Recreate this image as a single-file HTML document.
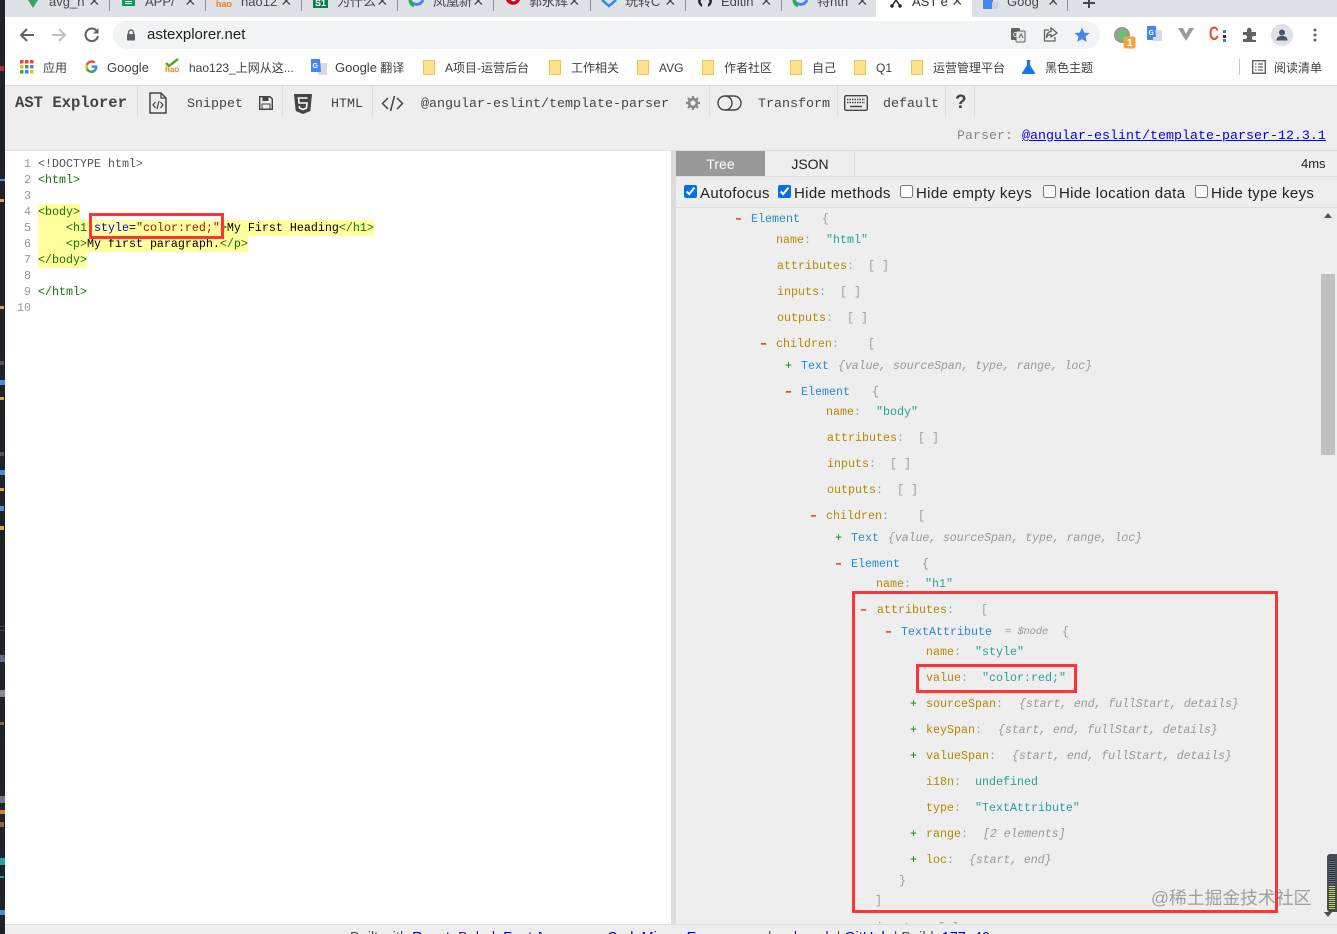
<!DOCTYPE html>
<html lang="en"><head><meta charset="utf-8"><title>AST Explorer</title>
<style>
*{box-sizing:border-box}
html,body{margin:0;padding:0;width:1337px;height:934px;overflow:hidden;background:#fff;font-family:"Liberation Sans","Noto Sans CJK SC",sans-serif}
.a{position:absolute;white-space:pre}
svg{position:absolute;overflow:visible}
.tab{font-size:13px;color:#45494e;line-height:12px;top:-4px}
.x{font-size:18px;color:#45494e;top:-6px;line-height:14px}
.sep{position:absolute;top:0;width:1px;height:11px;background:#8d9096}
.bm{font-size:12px;color:#3c4043;top:60px;line-height:16px}
.bm u{text-decoration:none;font-size:13px}
.m{font-family:"Liberation Mono","Noto Sans CJK SC",monospace}
.t{font-size:13.34px;color:#444;top:97px;line-height:16px;font-family:"Liberation Mono",monospace}
.v{position:absolute;top:86px;width:1px;height:31px;background:#ddd}
.c{font:11.67px/16px "Liberation Mono",monospace;color:#000;transform:translateY(1px)}
.ln{font:11.67px/16px "Liberation Mono",monospace;color:#999;width:24px;text-align:right;left:7px;transform:translateY(1px)}
.hl{position:absolute;background:#ffff9e;height:16px}
.g{color:#170}.b{color:#00f}.r{color:#a11}.k{color:#555}
.r1{font:11.67px/16px "Liberation Mono",monospace;transform:translateY(1px)}
.K{color:#b58900}.T{color:#268bd2}.V{color:#2aa198}.P{color:#93a1a1}
.K b{color:#93a1a1;font-weight:normal}
.I{color:#999;font-style:italic;letter-spacing:-.13px}
.mi{color:#f00;font-weight:bold}.pl{color:#080}
.cb{position:absolute;top:185px;margin:0;width:13px;height:13px;accent-color:#0b6fe8}
.cl{font-size:15px;top:185px;line-height:17px;color:#222;letter-spacing:.35px}
.box{position:absolute;border:3px solid #f33}
</style></head><body>
<!-- left dark strip -->
<div class="a" style="left:0;top:0;width:5px;height:934px;background:#1f2329"></div>
<div class="a" style="left:0;top:66px;width:4px;height:5px;background:#a33"></div>
<div class="a" style="left:0;top:179px;width:5px;height:2px;background:#4a90d9"></div>
<div class="a" style="left:0;top:199px;width:4px;height:3px;background:#d9a441"></div>
<div class="a" style="left:0;top:306px;width:4px;height:3px;background:#d9a441"></div>
<div class="a" style="left:0;top:361px;width:4px;height:4px;background:#555"></div>
<div class="a" style="left:0;top:380px;width:5px;height:5px;background:#4a90d9"></div>
<div class="a" style="left:0;top:397px;width:4px;height:3px;background:#d9a441"></div>
<div class="a" style="left:0;top:452px;width:4px;height:4px;background:#555"></div>
<div class="a" style="left:0;top:470px;width:5px;height:5px;background:#4a90d9"></div>
<div class="a" style="left:0;top:488px;width:4px;height:3px;background:#d9a441"></div>
<div class="a" style="left:0;top:506px;width:4px;height:5px;background:#4a90d9"></div>
<div class="a" style="left:0;top:526px;width:4px;height:4px;background:#d9a441"></div>
<div class="a" style="left:0;top:655px;width:5px;height:7px;background:#6a6a8a"></div>
<div class="a" style="left:0;top:630px;width:5px;height:1px;background:#444"></div>
<div class="a" style="left:0;top:626px;width:5px;height:1px;background:#444"></div>
<div class="a" style="left:0;top:690px;width:5px;height:7px;background:#888"></div>
<div class="a" style="left:3px;top:657px;width:2px;height:1px;background:#555"></div>
<div class="a" style="left:0;top:796px;width:5px;height:7px;background:#777"></div>
<div class="a" style="left:0;top:810px;width:5px;height:4px;background:#c9853a"></div>
<div class="a" style="left:3px;top:656px;width:2px;height:1px;background:#555"></div>
<div class="a" style="left:3px;top:656px;width:2px;height:1px;background:#555"></div>
<div class="a" style="left:0;top:722px;width:4px;height:3px;background:#8a6a3a"></div>
<div class="a" style="left:0;top:822px;width:4px;height:5px;background:#8a6a3a"></div>
<div class="a" style="left:0;top:858px;width:5px;height:7px;background:#2aa198"></div>
<div class="a" style="left:0;top:876px;width:4px;height:2px;background:#2aa198"></div>
<div class="a" style="left:0;top:910px;width:5px;height:5px;background:#4a90d9"></div>

<!-- tab strip -->
<div class="a" style="left:5px;top:0;width:1332px;height:17px;background:#dee1e6"></div>
<div class="a" style="left:876px;top:0;width:96px;height:17px;background:#fff"></div>
<div class="sep" style="left:109px"></div><div class="sep" style="left:205px"></div><div class="sep" style="left:301px"></div><div class="sep" style="left:397px"></div><div class="sep" style="left:493px"></div><div class="sep" style="left:590px"></div><div class="sep" style="left:685px"></div><div class="sep" style="left:781px"></div><div class="sep" style="left:1067px"></div>
<svg style="left:27px;top:0" width="12" height="9"><path d="M1 0H11L6 8Z" fill="#3aa56b"/></svg>
<span class="a tab" style="left:49px">avg_n</span><span class="a x" style="left:89px">×</span>
<div class="a" style="left:122px;top:0;width:13px;height:6px;background:#0f9d58"></div><div class="a" style="left:125px;top:1px;width:7px;height:1px;background:#fff"></div><div class="a" style="left:125px;top:3px;width:7px;height:1px;background:#fff"></div>
<span class="a tab" style="left:145px">APP/</span><span class="a x" style="left:185px">×</span>
<span class="a" style="left:216px;top:0;font:bold 9px/8px 'Liberation Sans';color:#f47a20">hao</span>
<span class="a tab" style="left:241px">hao12</span><span class="a x" style="left:281px">×</span>
<div class="a" style="left:313px;top:0;width:15px;height:8px;background:#0a7a52;color:#fff;font:bold 9px/7px 'Liberation Sans';text-align:center">S1</div>
<span class="a tab" style="left:337px">为什么</span><span class="a x" style="left:377px">×</span>
<svg style="left:409px;top:0" width="15" height="8"><path d="M1 0A7 7 0 0 0 14 0" fill="none" stroke="#4285f4" stroke-width="3"/><path d="M1 0A7 7 0 0 0 5 6" fill="none" stroke="#34a853" stroke-width="3"/></svg>
<span class="a tab" style="left:433px">凤凰新</span><span class="a x" style="left:473px">×</span>
<svg style="left:505px;top:0" width="16" height="9"><path d="M1 0A7.5 7.5 0 0 0 15 0Z" fill="#d7000f"/><path d="M6 0A3 3 0 0 0 11 0Z" fill="#fff"/></svg>
<span class="a tab" style="left:529px">郭永辉</span><span class="a x" style="left:569px">×</span>
<svg style="left:601px;top:0" width="16" height="8"><path d="M1 0L8 6L15 0" fill="none" stroke="#2e8bea" stroke-width="2.5"/></svg>
<span class="a tab" style="left:625px">玩转C</span><span class="a x" style="left:665px">×</span>
<svg style="left:697px;top:0" width="16" height="9"><path d="M1 0A7.5 7.5 0 0 0 5 7L5 4A3 3 0 0 1 4 0ZM15 0A7.5 7.5 0 0 1 11 7L11 4A3 3 0 0 0 12 0Z" fill="#24292e"/></svg>
<span class="a tab" style="left:721px">Editin</span><span class="a x" style="left:761px">×</span>
<svg style="left:793px;top:0" width="15" height="8"><path d="M1 0A7 7 0 0 0 14 0" fill="none" stroke="#4285f4" stroke-width="3"/><path d="M1 0A7 7 0 0 0 5 6" fill="none" stroke="#34a853" stroke-width="3"/></svg>
<span class="a tab" style="left:817px">特nth</span><span class="a x" style="left:857px">×</span>
<svg style="left:889px;top:0" width="14" height="8"><path d="M7 0L3 6M7 0L11 6" stroke="#222" stroke-width="1.4" fill="none"/><circle cx="3" cy="6" r="1.7" fill="#222"/><circle cx="11" cy="6" r="1.7" fill="#222"/></svg>
<span class="a tab" style="left:912px;color:#333">AST e</span><span class="a x" style="left:952px">×</span>
<div class="a" style="left:983px;top:0;width:10px;height:9px;background:#4285f4"></div><div class="a" style="left:992px;top:2px;width:6px;height:7px;background:#cfd2d6"></div>
<span class="a tab" style="left:1007px">Goog</span><span class="a x" style="left:1048px">×</span>
<div class="a" style="left:1083px;top:2px;width:12px;height:2px;background:#45494e"></div><div class="a" style="left:1088px;top:0;width:2px;height:8px;background:#45494e"></div>

<!-- omnibox row -->
<svg style="left:18px;top:26px" width="18" height="18"><path d="M16 9H3M9 3L3 9L9 15" fill="none" stroke="#5f6368" stroke-width="2"/></svg>
<svg style="left:50px;top:26px" width="18" height="18"><path d="M2 9H15M9 3L15 9L9 15" fill="none" stroke="#bdc1c6" stroke-width="2"/></svg>
<svg style="left:83px;top:26px" width="18" height="18"><path d="M14 5.2A6.3 6.3 0 1 0 15 10" fill="none" stroke="#5f6368" stroke-width="2"/><path d="M15.5 2V7.5H10Z" fill="#5f6368"/></svg>
<div class="a" style="left:113px;top:21px;width:987px;height:28px;border-radius:14px;background:#f1f3f4"></div>
<svg style="left:126px;top:29px" width="10" height="12"><path d="M2.5 5V3.5A2.5 2.5 0 0 1 7.5 3.5V5" fill="none" stroke="#5f6368" stroke-width="1.4"/><rect x="1" y="5" width="8" height="6.5" rx="1" fill="#5f6368"/></svg>
<span class="a" style="left:147px;top:27px;font-size:15px;line-height:16px;color:#202124">astexplorer.net</span>
<svg style="left:1010px;top:27px" width="16" height="16"><rect x="1" y="1" width="9" height="12" rx="1" fill="#5f6368"/><rect x="6" y="4" width="9" height="11" rx="1" fill="#e8eaed" stroke="#5f6368"/><path d="M9 11L11 7L13 11" stroke="#5f6368" fill="none"/><text x="3" y="10" font-size="7" fill="#fff" font-family="Liberation Sans">G</text></svg>
<svg style="left:1042px;top:27px" width="16" height="16"><path d="M7 3H2.5V14H13V10" fill="none" stroke="#5f6368" stroke-width="1.3"/><path d="M9 1L15 6L9 10V7.5C6.5 7.5 5 9 4.5 11C4.5 7 6.5 4.5 9 4.5Z" fill="none" stroke="#5f6368" stroke-width="1.3"/></svg>
<svg style="left:1074px;top:27px" width="16" height="16"><path d="M8 0.5L10.2 5.6L15.6 6L11.5 9.6L12.8 15L8 12.1L3.2 15L4.5 9.6L.4 6L5.8 5.6Z" fill="#4285f4"/></svg>
<svg style="left:1114px;top:27px" width="24" height="24"><circle cx="8" cy="8" r="6.5" fill="#6dc36d" stroke="#999" stroke-width="3"/><rect x="9.5" y="9.500" width="12" height="12" rx="2" fill="#f0a742"/><text x="13" y="19" font-size="10" font-weight="bold" fill="#fff" font-family="Liberation Sans">1</text></svg>
<svg style="left:1146px;top:26px" width="17" height="17"><path d="M1 0H10L11 14H1Z" fill="#4285f4"/><path d="M7 4H16V15H7Z" fill="#d8dadd"/><path d="M1 0H9L10 11H1Z" fill="#4285f4"/><text x="2.500" y="9" font-size="7" font-weight="bold" fill="#fff" font-family="Liberation Sans">G</text></svg>
<svg style="left:1177px;top:27px" width="18" height="15"><path d="M1 1H6L9 7L12 1H17L9 14Z" fill="#9a9a9a"/></svg>
<span class="a" style="left:1209px;top:25px;font:bold 19px/20px 'Liberation Sans';color:#e8502a;transform:scaleX(.72);transform-origin:0 0">C</span>
<div class="a" style="left:1223px;top:30px;width:3px;height:3px;background:#4a7bb8"></div><div class="a" style="left:1223px;top:35px;width:3px;height:3px;background:#333"></div><div class="a" style="left:1223px;top:39px;width:3px;height:3px;background:#4a7bb8"></div>
<svg style="left:1242px;top:27px" width="16" height="16"><path d="M1 5H5V3A2 2 0 0 1 9.500 3V5H14V9H12A2 2 0 0 0 12 13H14V15H1V12H3A2 2 0 0 0 3 8H1Z" fill="#5f6368"/></svg>
<div class="a" style="left:1271px;top:24px;width:22px;height:22px;border-radius:11px;background:#dfe1e5"></div>
<svg style="left:1275px;top:28px" width="14" height="14"><circle cx="7" cy="4.500" r="3" fill="#4a5568"/><path d="M1.500 12.500C1.500 9 4 8 7 8S12.500 9 12.500 12.500Z" fill="#4a5568"/></svg>
<svg style="left:1312px;top:28px" width="6" height="16"><circle cx="3" cy="2" r="1.500" fill="#5f6368"/><circle cx="3" cy="7" r="1.500" fill="#5f6368"/><circle cx="3" cy="12" r="1.500" fill="#5f6368"/></svg>

<!-- bookmarks -->
<svg style="left:20px;top:60px" width="14" height="14">
<rect x="0" y="0" width="3.500" height="3.500" fill="#ea4335"/><rect x="5" y="0" width="3.500" height="3.500" fill="#ea4335"/><rect x="10" y="0" width="3.500" height="3.500" fill="#ea4335"/>
<rect x="0" y="5" width="3.500" height="3.500" fill="#fbbc05"/><rect x="5" y="5" width="3.500" height="3.500" fill="#34a853"/><rect x="10" y="5" width="3.500" height="3.500" fill="#4285f4"/>
<rect x="0" y="10" width="3.500" height="3.500" fill="#34a853"/><rect x="5" y="10" width="3.500" height="3.500" fill="#4285f4"/><rect x="10" y="10" width="3.500" height="3.500" fill="#fbbc05"/></svg>
<span class="a bm" style="left:43px">应用</span>
<svg style="left:85px;top:60px" width="13" height="13" viewBox="0 0 24 24"><path d="M23 12.300c0-.8-.1-1.600-.2-2.300H12v4.400h6.200a5.300 5.300 0 0 1-2.300 3.500v2.900h3.700c2.200-2 3.400-5 3.400-8.500z" fill="#4285f4"/><path d="M12 24c3.100 0 5.700-1 7.600-2.800l-3.700-2.900c-1 .7-2.400 1.100-3.900 1.100-3 0-5.500-2-6.400-4.700H1.800v3A12 12 0 0 0 12 24z" fill="#34a853"/><path d="M5.600 14.700a7.200 7.200 0 0 1 0-4.600v-3H1.800a12 12 0 0 0 0 10.600z" fill="#fbbc05"/><path d="M12 4.800c1.700 0 3.200.6 4.400 1.700l3.300-3.300A12 12 0 0 0 1.800 7.100l3.800 3C6.500 6.800 9 4.800 12 4.800z" fill="#ea4335"/></svg>
<span class="a bm" style="left:107px"><u>Google</u></span>
<svg style="left:165px;top:59px" width="16" height="8"><path d="M1 4L4 7L13 0" fill="none" stroke="#5aa620" stroke-width="2.500"/></svg>
<span class="a" style="left:165px;top:66px;font:bold 8px/8px 'Liberation Sans';color:#f47a20">hao</span>
<span class="a bm" style="left:189px">hao123_上网从这...</span>
<svg style="left:311px;top:59px" width="17" height="16"><path d="M6 4H16V16H7Z" fill="#d8dadd"/><path d="M0 0H9L10 13H0Z" fill="#4285f4"/><text x="1.500" y="9" font-size="7" font-weight="bold" fill="#fff" font-family="Liberation Sans">G</text></svg>
<span class="a bm" style="left:335px"><u>Google</u> 翻译</span>
<svg style="left:423px;top:60px" width="13" height="15"><path d="M.5.500H11.500V14.500H.5Z" fill="#ffe28f" stroke="#f2c14e"/></svg>
<span class="a bm" style="left:445px">A项目-运营后台</span>
<svg style="left:549px;top:60px" width="13" height="15"><path d="M.5.500H11.500V14.500H.5Z" fill="#ffe28f" stroke="#f2c14e"/></svg>
<span class="a bm" style="left:571px">工作相关</span>
<svg style="left:637px;top:60px" width="13" height="15"><path d="M.5.500H11.500V14.500H.5Z" fill="#ffe28f" stroke="#f2c14e"/></svg>
<span class="a bm" style="left:659px">AVG</span>
<svg style="left:702px;top:60px" width="13" height="15"><path d="M.5.500H11.500V14.500H.5Z" fill="#ffe28f" stroke="#f2c14e"/></svg>
<span class="a bm" style="left:724px">作者社区</span>
<svg style="left:790px;top:60px" width="13" height="15"><path d="M.5.500H11.500V14.500H.5Z" fill="#ffe28f" stroke="#f2c14e"/></svg>
<span class="a bm" style="left:812px">自己</span>
<svg style="left:854px;top:60px" width="13" height="15"><path d="M.5.500H11.500V14.500H.5Z" fill="#ffe28f" stroke="#f2c14e"/></svg>
<span class="a bm" style="left:876px">Q1</span>
<svg style="left:911px;top:60px" width="13" height="15"><path d="M.5.500H11.500V14.500H.5Z" fill="#ffe28f" stroke="#f2c14e"/></svg>
<span class="a bm" style="left:933px">运营管理平台</span>
<svg style="left:1022px;top:60px" width="13" height="14"><path d="M4.500 0H8.500V1H8V5L13 13V14H0V13L5 5V1H4.500Z" fill="#1a73e8"/></svg>
<span class="a bm" style="left:1045px">黑色主题</span>
<div class="a" style="left:1239px;top:59px;width:1px;height:16px;background:#c4c7ca"></div>
<svg style="left:1252px;top:60px" width="14" height="14"><rect x=".7" y=".7" width="12.600" height="12.600" fill="none" stroke="#5f6368" stroke-width="1.400"/><path d="M3 4H4.500M3 7H4.500M3 10H4.500M6 4H11M6 7H11M6 10H11" stroke="#5f6368" stroke-width="1.200"/></svg>
<span class="a bm" style="left:1274px">阅读清单</span>

<!-- AST toolbar -->
<div class="a" style="left:5px;top:85px;width:1332px;height:66px;background:#eee;border-top:1px solid #d6d6d6;border-bottom:1px solid #ddd"></div>
<span class="a" style="left:15px;top:94px;font:bold 15.550px/18px 'Liberation Mono',monospace;color:#444">AST Explorer</span>
<div class="v" style="left:137px"></div>
<svg style="left:149px;top:92px" width="18" height="22"><path d="M1 1H12L17 6V21H1Z" fill="none" stroke="#444" stroke-width="1.500"/><path d="M12 1V6H17" fill="none" stroke="#444" stroke-width="1.300"/><path d="M6.500 10L4 13L6.500 16M11.500 10L14 13L11.500 16M10 9L8 17" fill="none" stroke="#444" stroke-width="1.200"/></svg>
<span class="a t" style="left:187px">Snippet</span>
<svg style="left:259px;top:96px" width="14" height="14"><path d="M.7.7H11L13.300 3V13.300H.7Z" fill="none" stroke="#444" stroke-width="1.400"/><rect x="3.500" y="1" width="6" height="4" fill="#444"/><rect x="3" y="8" width="8" height="5" fill="none" stroke="#444"/></svg>
<div class="v" style="left:282px"></div>
<svg style="left:294px;top:94px" width="18" height="20"><path d="M0 0H18L16.300 17L9 20L1.700 17Z" fill="#444"/><path d="M13.500 4H4.500L5 9H13L12.500 14L9 15.500L5.500 14L5.300 12" fill="none" stroke="#fff" stroke-width="1.600"/></svg>
<span class="a t" style="left:331px;">HTML</span>
<div class="v" style="left:372px"></div>
<svg style="left:381px;top:95px" width="23" height="17"><path d="M7 3L1.500 8.500L7 14M16 3L21.500 8.500L16 14M13.500 1L9.500 16" fill="none" stroke="#444" stroke-width="1.500"/></svg>
<span class="a t" style="left:421px">@angular-eslint/template-parser</span>
<svg style="left:686px;top:96px" width="14" height="14" viewBox="0 0 16 16"><circle cx="8" cy="8" r="4.500" fill="none" stroke="#888" stroke-width="3"/><path d="M8 0V3M8 13V16M0 8H3M13 8H16M2.300 2.300L4.500 4.500M11.500 11.500L13.700 13.700M2.300 13.700L4.500 11.500M11.500 4.500L13.700 2.300" stroke="#888" stroke-width="2.500"/></svg>
<div class="v" style="left:709px"></div>
<svg style="left:717px;top:95px" width="25" height="16"><circle cx="8" cy="8" r="7" fill="none" stroke="#444" stroke-width="1.400"/><path d="M9 1H17A7 7 0 0 1 17 15H9" fill="none" stroke="#444" stroke-width="1.400"/></svg>
<span class="a t" style="left:758px">Transform</span>
<div class="v" style="left:837px"></div>
<svg style="left:844px;top:95px" width="24" height="16"><rect x=".7" y=".7" width="22.600" height="14.600" rx="1.500" fill="none" stroke="#444" stroke-width="1.400"/><path d="M3 4.500H21M3 7.500H21" stroke="#444" stroke-width="1.500" stroke-dasharray="1.500 1"/><path d="M6 11.500H18" stroke="#444" stroke-width="1.500"/></svg>
<span class="a t" style="left:883px">default</span>
<div class="v" style="left:945px"></div>
<span class="a" style="left:955px;top:92px;font:bold 19px/22px 'Liberation Sans';color:#444">?</span>
<div class="v" style="left:974px"></div>
<span class="a t" style="left:957px;top:129px;color:#888">Parser: </span>
<span class="a t" style="left:1022px;top:129px;color:#00e;text-decoration:underline">@angular-eslint/template-parser-12.3.1</span>

<!-- code -->
<div class="hl" style="left:38px;top:204px;width:42px"></div>
<div class="hl" style="left:38px;top:220px;width:336px"></div>
<div class="hl" style="left:38px;top:236px;width:210px"></div>
<div class="hl" style="left:38px;top:252px;width:49px"></div>
<div class="a ln" style="top:155px">1</div><div class="a ln" style="top:171px">2</div><div class="a ln" style="top:187px">3</div><div class="a ln" style="top:203px">4</div><div class="a ln" style="top:219px">5</div><div class="a ln" style="top:235px">6</div><div class="a ln" style="top:251px">7</div><div class="a ln" style="top:267px">8</div><div class="a ln" style="top:283px">9</div><div class="a ln" style="top:299px">10</div>
<div class="a c k" style="left:38px;top:155px">&lt;!DOCTYPE html&gt;</div>
<div class="a c g" style="left:38px;top:171px">&lt;html&gt;</div>
<div class="a c g" style="left:38px;top:203px">&lt;body&gt;</div>
<div class="a c" style="left:38px;top:219px">    <span class="g">&lt;h1</span> <span class="b">style</span>=<span class="r">"color:red;"</span><span class="g">&gt;</span>My First Heading<span class="g">&lt;/h1&gt;</span></div>
<div class="a c" style="left:38px;top:235px">    <span class="g">&lt;p&gt;</span>My first paragraph.<span class="g">&lt;/p&gt;</span></div>
<div class="a c g" style="left:38px;top:251px">&lt;/body&gt;</div>
<div class="a c g" style="left:38px;top:283px">&lt;/html&gt;</div>
<div class="box" style="left:89px;top:213px;width:135px;height:26px"></div>

<!-- right pane -->
<div class="a" style="left:671px;top:151px;width:5px;height:773px;background:#ddd"></div>
<div class="a" style="left:676px;top:151px;width:661px;height:773px;background:#eee"></div>
<div class="a" style="left:676px;top:151px;width:89px;height:25px;background:#999;color:#fff;font-size:14px;line-height:26px;text-align:center">Tree</div>
<div class="a" style="left:766px;top:151px;width:89px;height:25px;color:#222;font-size:14px;line-height:26px;text-align:center;border-right:1px solid #ddd">JSON</div>
<span class="a" style="left:1301px;top:156px;font-size:13px;line-height:16px;color:#222">4ms</span>
<div class="a" style="left:676px;top:176px;width:661px;height:1px;background:#ddd"></div>
<input class="cb" style="left:684px" type="checkbox" checked><span class="a cl" style="left:700px">Autofocus</span>
<input class="cb" style="left:778px" type="checkbox" checked><span class="a cl" style="left:794px">Hide methods</span>
<input class="cb" style="left:900px" type="checkbox"><span class="a cl" style="left:916px">Hide empty keys</span>
<input class="cb" style="left:1043px" type="checkbox"><span class="a cl" style="left:1059px">Hide location data</span>
<input class="cb" style="left:1195px" type="checkbox"><span class="a cl" style="left:1211px">Hide type keys</span>
<div class="a" style="left:676px;top:207px;width:661px;height:1px;background:#ddd"></div>

<!-- tree -->
<div class="a r1 mi" style="left:735px;top:210px">–</div><div class="a r1 T" style="left:751px;top:210px">Element</div><div class="a r1 P" style="left:822px;top:210px">{</div>
<div class="a r1 K" style="left:776px;top:231px">name<b>:</b></div><div class="a r1 V" style="left:826px;top:231px">"html"</div>
<div class="a r1 K" style="left:777px;top:257px">attributes<b>:</b></div><div class="a r1 P" style="left:868px;top:257px">[ ]</div>
<div class="a r1 K" style="left:777px;top:283px">inputs<b>:</b></div><div class="a r1 P" style="left:840px;top:283px">[ ]</div>
<div class="a r1 K" style="left:777px;top:309px">outputs<b>:</b></div><div class="a r1 P" style="left:847px;top:309px">[ ]</div>
<div class="a r1 mi" style="left:760px;top:335px">–</div><div class="a r1 K" style="left:776px;top:335px">children<b>:</b></div><div class="a r1 P" style="left:868px;top:335px">[</div>
<div class="a r1 pl" style="left:785px;top:357px">+</div><div class="a r1 T" style="left:801px;top:357px">Text</div><div class="a r1 I" style="left:838px;top:357px">{value, sourceSpan, type, range, loc}</div>
<div class="a r1 mi" style="left:785px;top:383px">–</div><div class="a r1 T" style="left:801px;top:383px">Element</div><div class="a r1 P" style="left:872px;top:383px">{</div>
<div class="a r1 K" style="left:826px;top:403px">name<b>:</b></div><div class="a r1 V" style="left:876px;top:403px">"body"</div>
<div class="a r1 K" style="left:827px;top:429px">attributes<b>:</b></div><div class="a r1 P" style="left:918px;top:429px">[ ]</div>
<div class="a r1 K" style="left:827px;top:455px">inputs<b>:</b></div><div class="a r1 P" style="left:890px;top:455px">[ ]</div>
<div class="a r1 K" style="left:827px;top:481px">outputs<b>:</b></div><div class="a r1 P" style="left:897px;top:481px">[ ]</div>
<div class="a r1 mi" style="left:810px;top:507px">–</div><div class="a r1 K" style="left:826px;top:507px">children<b>:</b></div><div class="a r1 P" style="left:918px;top:507px">[</div>
<div class="a r1 pl" style="left:835px;top:529px">+</div><div class="a r1 T" style="left:851px;top:529px">Text</div><div class="a r1 I" style="left:888px;top:529px">{value, sourceSpan, type, range, loc}</div>
<div class="a r1 mi" style="left:835px;top:555px">–</div><div class="a r1 T" style="left:851px;top:555px">Element</div><div class="a r1 P" style="left:922px;top:555px">{</div>
<div class="a r1 K" style="left:876px;top:575px">name<b>:</b></div><div class="a r1 V" style="left:925px;top:575px">"h1"</div>
<div class="a r1 mi" style="left:860px;top:601px">–</div><div class="a r1 K" style="left:877px;top:601px">attributes<b>:</b></div><div class="a r1 P" style="left:981px;top:601px">[</div>
<div class="a r1 mi" style="left:885px;top:623px">–</div><div class="a r1 T" style="left:901px;top:623px">TextAttribute</div><div class="a r1 I" style="left:1005px;top:623px;font-size:10.500px">= $node</div><div class="a r1 P" style="left:1062px;top:623px">{</div>
<div class="a r1 K" style="left:926px;top:643px">name<b>:</b></div><div class="a r1 V" style="left:975px;top:643px">"style"</div>
<div class="a r1 K" style="left:926px;top:669px">value<b>:</b></div><div class="a r1 V" style="left:982px;top:669px">"color:red;"</div>
<div class="a r1 pl" style="left:910px;top:695px">+</div><div class="a r1 K" style="left:926px;top:695px">sourceSpan<b>:</b></div><div class="a r1 I" style="left:1019px;top:695px;">{start, end, fullStart, details}</div>
<div class="a r1 pl" style="left:910px;top:721px">+</div><div class="a r1 K" style="left:926px;top:721px">keySpan<b>:</b></div><div class="a r1 I" style="left:998px;top:721px">{start, end, fullStart, details}</div>
<div class="a r1 pl" style="left:910px;top:747px">+</div><div class="a r1 K" style="left:926px;top:747px">valueSpan<b>:</b></div><div class="a r1 I" style="left:1012px;top:747px">{start, end, fullStart, details}</div>
<div class="a r1 K" style="left:926px;top:773px">i18n<b>:</b></div><div class="a r1 V" style="left:975px;top:773px">undefined</div>
<div class="a r1 K" style="left:926px;top:799px">type<b>:</b></div><div class="a r1 V" style="left:975px;top:799px">"TextAttribute"</div>
<div class="a r1 pl" style="left:910px;top:825px">+</div><div class="a r1 K" style="left:926px;top:825px">range<b>:</b></div><div class="a r1 I" style="left:983px;top:825px">[2 elements]</div>
<div class="a r1 pl" style="left:910px;top:851px">+</div><div class="a r1 K" style="left:926px;top:851px">loc<b>:</b></div><div class="a r1 I" style="left:969px;top:851px">{start, end}</div>
<div class="a r1 P" style="left:899px;top:872px">}</div>
<div class="a r1 P" style="left:875px;top:892px">]</div>
<div class="a" style="left:876px;top:920px;width:460px;height:4px;overflow:hidden"><div class="a r1 K" style="left:0;top:-1px">inputs<b>:</b></div><div class="a r1 P" style="left:62px;top:-1px">[ ]</div></div>

<div class="box" style="left:852px;top:591px;width:426px;height:322px"></div>
<div class="box" style="left:916px;top:664px;width:161px;height:29px"></div>

<!-- scrollbar -->
<div class="a" style="left:1321px;top:274px;width:14px;height:181px;background:#c1c1c1"></div>
<svg style="left:1324px;top:213px" width="8" height="5"><path d="M4 0L8 5H0Z" fill="#505050"/></svg>
<svg style="left:1324px;top:912px" width="8" height="5"><path d="M4 5L8 0H0Z" fill="#505050"/></svg>
<div class="a" style="left:1327px;top:854px;width:10px;height:58px;background:#444c56;border-radius:3px 0 0 3px"></div>
<div class="a" style="left:1329px;top:860px;width:6px;height:24px;background:repeating-linear-gradient(#2b3036 0 1px,#6b7280 1px 2px)"></div>
<div class="a" style="left:1329px;top:885px;width:6px;height:25px;background:repeating-linear-gradient(#3a4a30 0 1px,#c7d36a 1px 2px)"></div>

<span class="a" style="left:1151px;top:887px;font-size:17.800px;line-height:22px;color:rgba(110,110,110,.62)">@稀土掘金技术社区</span>

<!-- footer -->
<div class="a" style="left:5px;top:924px;width:1332px;height:10px;background:#eee;border-top:1px solid #ddd;overflow:hidden"></div>
<div class="a" style="left:350px;top:930px;font-size:14.500px;line-height:16px;color:#555;width:660px;height:4px;overflow:hidden">Built with <span style="color:#00e">React</span>, <span style="color:#551a8b">Babel</span>, <span style="color:#00e">Font Awesome</span>, <span style="color:#00e">CodeMirror</span>, <span style="color:#00e">Express</span>, and <span style="color:#551a8b">webpack</span> | <span style="color:#00e">GitHub</span> | Build: <span style="color:#00e">177e40</span></div>
</body></html>
